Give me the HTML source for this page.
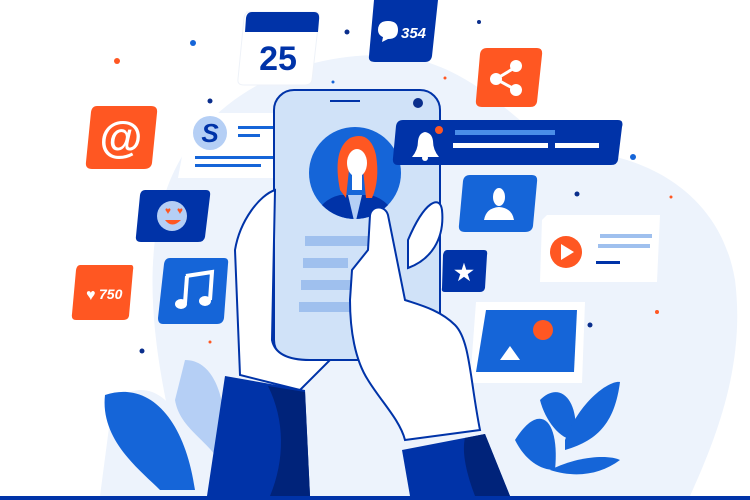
<!DOCTYPE html>
<html><head><meta charset="utf-8"><style>
html,body{margin:0;padding:0;background:#fff;width:750px;height:500px;overflow:hidden}
svg{display:block}
text{font-family:"Liberation Sans",sans-serif;font-weight:bold}
</style></head><body>
<svg width="750" height="500" viewBox="0 0 750 500">
<path d="M170 420 C150 330 140 230 180 160 C220 90 300 55 380 55 C470 55 520 130 560 150 C640 150 720 190 735 280 C745 360 720 430 690 496 L180 496 Z" fill="#edf3fc"/>
<path d="M110 420 C120 380 160 380 180 420 L180 496 L100 496Z" fill="#edf3fc"/>
<circle cx="117" cy="61" r="3" fill="#ff5722"/><circle cx="193" cy="43" r="3" fill="#1565d8"/>
<circle cx="210" cy="101" r="2.5" fill="#0a2e8c"/><circle cx="347" cy="32" r="2.5" fill="#0a2e8c"/>
<circle cx="333" cy="82" r="1.5" fill="#1565d8"/><circle cx="479" cy="22" r="2" fill="#0a2e8c"/>
<circle cx="445" cy="78" r="1.5" fill="#ff5722"/><circle cx="633" cy="157" r="3" fill="#1565d8"/>
<circle cx="577" cy="194" r="2.5" fill="#0a2e8c"/><circle cx="671" cy="197" r="1.5" fill="#ff5722"/>
<circle cx="142" cy="351" r="2.5" fill="#0a2e8c"/><circle cx="210" cy="342" r="1.5" fill="#ff5722"/>
<circle cx="590" cy="325" r="2.5" fill="#0a2e8c"/><circle cx="657" cy="312" r="2" fill="#ff5722"/>
<!-- calendar -->
<path d="M246 12 H316 Q320 12 319 18 L312 80 Q311 85 305 85 H244 Q237 85 238 79 L244 18 Q245 12 250 12Z" fill="#fff" stroke="#eef2f8" stroke-width="1"/>
<path d="M250 12 H314 Q320 12 319 20 L318 32 H245 L246 18 Q247 12 252 12Z" fill="#0033a8"/>
<text x="278" y="70" font-size="34" fill="#0033a8" text-anchor="middle">25</text>
<!-- 354 -->
<path d="M374 0 H438 L432 56 Q431 62 425 62 H375 Q368 62 369 56 Z" fill="#0033a8"/>
<path d="M378 30 Q378 21 388 21 Q398 21 398 30 Q398 39 388 39 L382 42 L383 37 Q378 35 378 30Z" fill="#fff"/>
<text x="401" y="38" font-size="15" fill="#fff" font-style="italic">354</text>
<!-- share -->
<path d="M485 48 H537 Q543 48 542 55 L537 102 Q536 107 530 107 H482 Q475 107 476 100 L480 54 Q481 48 487 48Z" fill="#ff5722"/>
<g stroke="#fff" stroke-width="3"><line x1="496" y1="79" x2="516" y2="67"/><line x1="496" y1="79" x2="516" y2="90"/></g>
<circle cx="496" cy="79" r="6" fill="#fff"/><circle cx="516" cy="66" r="6" fill="#fff"/><circle cx="516" cy="90" r="6" fill="#fff"/>
<!-- @ -->
<path d="M97 106 H151 Q158 106 157 113 L152 163 Q151 169 144 169 H92 Q85 169 86 162 L91 112 Q92 106 97 106Z" fill="#ff5722"/>
<text x="121" y="152" font-size="44" fill="#fff" text-anchor="middle" font-weight="normal">@</text>
<!-- S card -->
<path d="M190 113 H316 L310 178 H178Z" fill="#fff"/>
<circle cx="210" cy="133" r="17" fill="#b5cff5"/>
<text x="210" y="142" font-size="26" fill="#0033a8" text-anchor="middle" font-style="italic">S</text>
<rect x="238" y="126" width="40" height="3" fill="#1565d8"/><rect x="238" y="134" width="22" height="3" fill="#1565d8"/>
<rect x="195" y="156" width="84" height="3" fill="#1565d8"/><rect x="195" y="164" width="66" height="3" fill="#1565d8"/>
<!-- emoji -->
<path d="M145 190 H206 Q211 190 210 196 L205 237 Q204 242 198 242 H141 Q135 242 136 236 L140 195 Q141 190 145 190Z" fill="#0033a8"/>
<circle cx="172" cy="216" r="15" fill="#b5cff5"/>
<text x="168" y="214" font-size="10" fill="#ff5722" text-anchor="middle">♥</text><text x="180" y="214" font-size="10" fill="#ff5722" text-anchor="middle">♥</text>
<path d="M165 220 Q172 229 181 220Z" fill="#ff5722"/>
<!-- 750 -->
<path d="M80 265 H131 Q134 265 133 270 L129 316 Q128 320 123 320 H76 Q71 320 72 314 L76 270 Q77 265 80 265Z" fill="#ff5722"/>
<text x="86" y="300" font-size="16" fill="#fff">♥</text><text x="99" y="299" font-size="14" fill="#fff" font-style="italic">750</text>
<!-- music -->
<path d="M170 258 H224 Q229 258 228 264 L224 318 Q223 324 217 324 H163 Q158 324 158 318 L164 264 Q165 258 170 258Z" fill="#1565d8"/>
<path d="M186 276 L212 272 L210 300" stroke="#fff" stroke-width="4" fill="none"/><line x1="187" y1="276" x2="185" y2="303" stroke="#fff" stroke-width="4"/>
<ellipse cx="181" cy="304" rx="6" ry="5" fill="#fff"/><ellipse cx="205" cy="301" rx="6" ry="5" fill="#fff"/>
<!-- leaves -->
<path d="M105 395 C150 380 185 420 195 490 L160 490 C140 470 100 440 105 395Z" fill="#1565d8"/>
<path d="M185 360 C215 360 230 400 225 470 C210 440 180 430 175 400 Z" fill="#b5cff5"/>
<path d="M515 440 C540 400 560 420 555 470 C540 470 525 460 515 440Z" fill="#1565d8"/>
<path d="M540 400 C560 380 580 400 575 440 C560 440 545 420 540 400Z" fill="#1565d8"/>
<path d="M565 440 C580 400 610 380 620 382 C615 420 600 440 565 450Z" fill="#1565d8"/>
<path d="M550 470 C580 455 610 455 620 460 C600 475 575 478 550 470Z" fill="#1565d8"/>
<!-- phone -->
<rect x="274" y="90" width="166" height="270" rx="20" fill="#d0e2f8" stroke="#0033a8" stroke-width="2"/>
<line x1="330" y1="101" x2="360" y2="101" stroke="#0033a8" stroke-width="2"/>
<circle cx="418" cy="103" r="5" fill="#0a2e8c"/>
<clipPath id="av"><circle cx="355" cy="173" r="46"/></clipPath>
<circle cx="355" cy="173" r="46" fill="#1565d8"/>
<g clip-path="url(#av)">
<path d="M312 225 Q318 200 340 195 L370 195 Q392 200 398 225Z" fill="#0033a8"/>
<path d="M348 195 L355 225 L362 195Z" fill="#b5cff5"/>
<path d="M340 190 Q332 150 350 138 Q370 130 376 155 Q380 180 372 198 L366 198 L362 160 L350 160 L346 198Z" fill="#ff5722"/>
<ellipse cx="357" cy="163" rx="10" ry="14" fill="#fff"/>
<rect x="352" y="174" width="10" height="16" fill="#fff"/>
</g>
<rect x="305" y="236" width="70" height="10" fill="#9fc0ee"/><rect x="303" y="258" width="45" height="10" fill="#9fc0ee"/>
<rect x="301" y="280" width="60" height="10" fill="#9fc0ee"/><rect x="299" y="302" width="55" height="10" fill="#9fc0ee"/>
<!-- notification -->
<path d="M400 120 H618 Q624 120 622 127 L618 160 Q617 165 611 165 H398 Q392 165 393 158 L396 126 Q397 120 403 120Z" fill="#0033a8"/>
<path d="M412 157 Q418 150 418 141 Q419 133 425 132 Q432 133 433 141 Q433 150 439 157Z" fill="#fff"/>
<circle cx="425" cy="158" r="3" fill="#fff"/>
<circle cx="439" cy="130" r="4" fill="#ff5722"/>
<rect x="455" y="130" width="100" height="5" fill="#4a8ee8"/><rect x="453" y="143" width="95" height="5" fill="#fff"/><rect x="555" y="143" width="44" height="5" fill="#fff"/>
<!-- user -->
<path d="M468 175 H532 Q538 175 537 182 L533 226 Q532 232 525 232 H465 Q458 232 459 225 L463 181 Q464 175 470 175Z" fill="#1565d8"/>
<ellipse cx="499" cy="197" rx="6" ry="9" fill="#fff"/><path d="M484 220 Q486 208 499 207 Q512 208 514 220Z" fill="#fff"/>
<!-- video -->
<path d="M547 215 H660 L657 282 H540 L542 220Z" fill="#fff"/>
<circle cx="566" cy="252" r="16" fill="#ff5722"/><path d="M561 244 L574 252 L561 260Z" fill="#fff"/>
<rect x="600" y="234" width="52" height="4" fill="#9fc0ee"/><rect x="598" y="244" width="52" height="4" fill="#9fc0ee"/><rect x="596" y="261" width="24" height="3" fill="#0033a8"/>
<!-- star -->
<path d="M447 250 H484 Q488 250 487 255 L485 288 Q484 292 480 292 H445 Q441 292 442 288 L443 255 Q444 250 447 250Z" fill="#0033a8"/>
<text x="464" y="280" font-size="22" fill="#fff" text-anchor="middle">★</text>
<!-- image -->
<path d="M476 302 H585 L582 383 H470Z" fill="#fff"/>
<path d="M486 310 H577 L574 372 H476Z" fill="#1565d8"/>
<circle cx="543" cy="330" r="10" fill="#ff5722"/>
<path d="M500 360 L510 346 L520 360Z" fill="#fff"/>
<!-- left hand -->
<path d="M240 375 L235 250 C240 220 260 195 275 190 L272 340 C275 355 290 360 310 360 L330 360 L300 390Z" fill="#fff" stroke="#0033a8" stroke-width="2"/>
<path d="M408 240 C425 200 440 195 442 210 C445 240 430 260 408 268Z" fill="#fff" stroke="#0033a8" stroke-width="2"/>
<!-- right hand -->
<path d="M350 300 L352 270 L368 250 L370 215 C372 205 385 205 388 215 L405 300 C420 305 440 310 455 325 C470 340 470 380 480 430 L405 440 C400 420 380 400 368 380 C355 360 350 330 350 300Z" fill="#fff" stroke="#0033a8" stroke-width="2"/>
<!-- sleeves -->
<path d="M225 376 L305 390 L310 496 L207 496Z" fill="#0033a8"/>
<path d="M268 386 L305 392 L310 496 L270 496 C285 460 285 420 268 386Z" fill="#00237a"/>
<path d="M402 450 L485 434 L510 496 L410 496Z" fill="#0033a8"/>
<path d="M465 438 L485 434 L510 496 L475 496 C465 470 462 450 465 438Z" fill="#00237a"/>
<rect x="0" y="496" width="750" height="4" fill="#0033a8"/>
</svg>
</body></html>
